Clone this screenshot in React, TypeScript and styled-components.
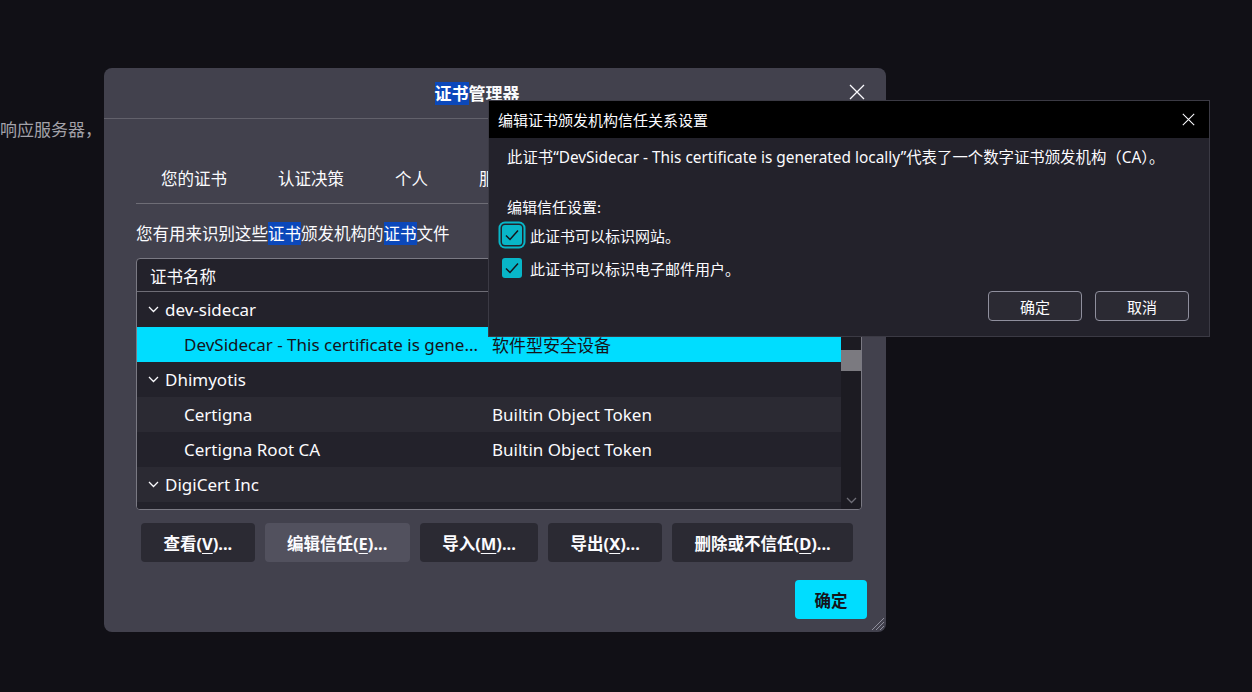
import styled, { createGlobalStyle } from 'styled-components';

const GlobalStyle = createGlobalStyle`
  html, body {
    margin: 0;
    padding: 0;
    background: #111016;
  }
  body {
    font-family: "Noto Sans", "Noto Sans CJK SC", sans-serif;
    color: #fbfbfe;
  }
  * {
    box-sizing: border-box;
  }
`;

const Screen = styled.div`
  position: relative;
  width: 1252px;
  height: 692px;
  overflow: hidden;
  background: #111016;
`;

const PageText = styled.p`
  margin: 0;
  padding-top: 117px;
  font-size: 17px;
  line-height: 26px;
  color: #a3a2a9;
`;

const Window = styled.div`
  position: absolute;
  left: 104px;
  top: 68px;
  width: 782px;
  height: 564px;
  background: #42414d;
  border-radius: 8px;
  display: flex;
  flex-direction: column;
`;

const TitleBar = styled.div`
  display: flex;
  align-items: center;
  height: 51px;
  padding-bottom: 2px;
  border-bottom: 1px solid #62616b;
`;

const Title = styled.h1`
  flex: 1;
  margin: 0 0 0 4px;
  text-align: center;
  font-size: 17px;
  font-weight: 700;
`;

const Mark = styled.span`
  background: #0b48ba;
  color: #fff;
`;

const CloseButton = styled.button`
  width: 22px;
  height: 22px;
  margin-right: 18px;
  padding: 0;
  border: none;
  background: transparent;
  display: flex;
  align-items: center;
  justify-content: center;
`;

const Body = styled.div`
  padding: 0 24px 0 32px;
  display: flex;
  flex-direction: column;
`;

const Tabs = styled.div`
  margin-top: 35px;
  height: 50px;
  display: flex;
  gap: 1px;
  border-bottom: 1px solid #6e6d76;
`;

const Tab = styled.div`
  padding: 0 25px 2px;
  display: flex;
  align-items: center;
  font-size: 16.5px;
  white-space: nowrap;
`;

const Description = styled.p`
  margin: 18px 0 0;
  font-size: 16.5px;
  line-height: 24px;
  padding-bottom: 1px;
`;

const Table = styled.div`
  margin-top: 11px;
  height: 252px;
  border: 1px solid #7a7983;
  border-radius: 4px;
  background: #23222b;
  display: flex;
  flex-direction: column;
  overflow: hidden;
`;

const Header = styled.div`
  height: 33px;
  flex-shrink: 0;
  display: flex;
  align-items: center;
  padding-top: 1px;
  border-bottom: 1px solid #6e6d76;
  font-size: 16.5px;
`;

const HeaderCell = styled.div<{ $width?: number }>`
  width: ${(p) => (p.$width ? `${p.$width}px` : 'auto')};
  flex: ${(p) => (p.$width ? 'none' : 1)};
  padding-left: 13px;
`;

const TableBody = styled.div`
  flex: 1;
  display: flex;
  overflow: hidden;
`;

const Rows = styled.div`
  flex: 1;
`;

const Row = styled.div<{ $alt?: boolean; $selected?: boolean }>`
  height: 35px;
  display: flex;
  align-items: center;
  font-size: 17px;
  white-space: nowrap;
  background: ${(p) => (p.$selected ? '#00ddff' : p.$alt ? '#2b2a33' : '#23222b')};
  color: ${(p) => (p.$selected ? '#15141a' : '#fbfbfe')};
`;

const NameCell = styled.div<{ $child?: boolean }>`
  width: 355px;
  flex: none;
  display: flex;
  align-items: center;
  gap: 6px;
  padding-left: ${(p) => (p.$child ? '47px' : '11px')};
  overflow: hidden;
`;

const TokenCell = styled.div`
  flex: 1;
`;

const Scrollbar = styled.div`
  width: 20px;
  flex: none;
  background: #1c1b22;
  display: flex;
  flex-direction: column;
  align-items: center;
`;

const Thumb = styled.div`
  margin-top: 58px;
  width: 20px;
  height: 21px;
  background: #7b7a80;
`;

const ScrollArrow = styled.div`
  margin-top: auto;
  margin-bottom: 5px;
  display: flex;
`;

const ButtonRow = styled.div`
  margin-top: 13px;
  padding-left: 5px;
  display: flex;
  gap: 10px;
`;

const ActionButton = styled.button<{ $active?: boolean }>`
  height: 39px;
  padding: 0 22.4px;
  border: none;
  border-radius: 4px;
  background: ${(p) => (p.$active ? '#52515e' : '#2b2a33')};
  color: #fbfbfe;
  font-family: inherit;
  font-size: 16.5px;
  font-weight: 700;
  white-space: nowrap;
  u {
    text-underline-offset: 3px;
  }
`;

const OkRow = styled.div`
  margin-top: 18px;
  margin-right: -5px;
  display: flex;
  justify-content: flex-end;
`;

const PrimaryButton = styled.button`
  width: 72px;
  height: 39px;
  border: none;
  border-radius: 4px;
  background: #00ddff;
  color: #15141a;
  font-family: inherit;
  font-size: 16.5px;
  font-weight: 700;
`;

const Grip = styled.svg`
  position: absolute;
  right: 1px;
  bottom: 1px;
`;

const Dialog = styled.div`
  position: absolute;
  left: 488px;
  top: 100px;
  width: 722px;
  height: 237px;
  background: #23222b;
  border: 1px solid #3b3a44;
  display: flex;
  flex-direction: column;
`;

const DialogTitleBar = styled.div`
  height: 37px;
  background: #000;
  display: flex;
  align-items: center;
  justify-content: space-between;
  padding: 0 14px 0 9px;
  font-size: 15px;
`;

const DialogBody = styled.div`
  padding: 9px 20px 0 18px;
  display: flex;
  flex-direction: column;
  font-size: 15px;
`;

const Message = styled.p`
  margin: 0;
  font-size: 15.4px;
  line-height: 22px;
  white-space: nowrap;
`;

const SectionLabel = styled.p`
  margin: 27px 0 0;
  line-height: 22px;
`;

const CheckRow = styled.label<{ $first?: boolean }>`
  margin-top: ${(p) => (p.$first ? '3px' : '5px')};
  margin-left: -5px;
  height: 28px;
  display: flex;
  align-items: center;
  gap: 8px;
`;

const Box = styled.span<{ $focused?: boolean }>`
  width: 20px;
  height: 20px;
  border-radius: 3px;
  background: #08b6c8;
  display: flex;
  align-items: center;
  justify-content: center;
  box-shadow: ${(p) => (p.$focused ? '0 0 0 1.5px #23222b, 0 0 0 3.5px #08b6c8' : 'none')};
`;

const DialogButtons = styled.div`
  margin-top: 9px;
  display: flex;
  justify-content: flex-end;
  gap: 13px;
`;

const DialogButton = styled.button`
  width: 94px;
  height: 30px;
  border: 1px solid #8f8f9d;
  border-radius: 4px;
  background: #2b2a33;
  color: #fbfbfe;
  font-family: inherit;
  font-size: 15px;
`;

const Chevron = ({ color = '#fbfbfe' }: { color?: string }) => (
  <svg width="11" height="7" viewBox="0 0 11 7">
    <polyline points="1,1 5.5,5.5 10,1" fill="none" stroke={color} strokeWidth="1.3" />
  </svg>
);

const Cross = ({ size }: { size: number }) => (
  <svg width={size} height={size} viewBox="0 0 16 16">
    <path d="M1 1 L15 15 M15 1 L1 15" stroke="#fbfbfe" strokeWidth="1.3" fill="none" />
  </svg>
);

const Check = () => (
  <svg width="16" height="16" viewBox="0 0 16 16">
    <polyline points="2,8.5 6,12.5 14,3.5" fill="none" stroke="#15141a" strokeWidth="1.5" />
  </svg>
);

type Cert = { name: string; token?: string; child?: boolean; selected?: boolean };

const certs: Cert[] = [
  { name: 'dev-sidecar' },
  { name: 'DevSidecar - This certificate is gene...', token: '软件型安全设备', child: true, selected: true },
  { name: 'Dhimyotis' },
  { name: 'Certigna', token: 'Builtin Object Token', child: true },
  { name: 'Certigna Root CA', token: 'Builtin Object Token', child: true },
  { name: 'DigiCert Inc' },
  { name: '', child: true },
];

const tabs = ['您的证书', '认证决策', '个人', '服务器', '证书颁发机构'];

export default function App() {
  return (
    <Screen>
      <GlobalStyle />
      <PageText>响应服务器，</PageText>

      <Window>
        <TitleBar>
          <Title>
            <Mark>证书</Mark>管理器
          </Title>
          <CloseButton>
            <Cross size={16} />
          </CloseButton>
        </TitleBar>
        <Body>
          <Tabs>
            {tabs.map((t) => (
              <Tab key={t}>{t}</Tab>
            ))}
          </Tabs>
          <Description>
            您有用来识别这些<Mark>证书</Mark>颁发机构的<Mark>证书</Mark>文件
          </Description>
          <Table>
            <Header>
              <HeaderCell $width={355}>证书名称</HeaderCell>
              <HeaderCell />
            </Header>
            <TableBody>
              <Rows>
                {certs.map((c, i) => (
                  <Row key={i} $alt={i % 2 === 1} $selected={c.selected}>
                    <NameCell $child={c.child}>
                      {!c.child && <Chevron />}
                      {c.name}
                    </NameCell>
                    <TokenCell>{c.token}</TokenCell>
                  </Row>
                ))}
              </Rows>
              <Scrollbar>
                <Thumb />
                <ScrollArrow>
                  <Chevron color="#6e6d76" />
                </ScrollArrow>
              </Scrollbar>
            </TableBody>
          </Table>
          <ButtonRow>
            <ActionButton>
              查看(<u>V</u>)...
            </ActionButton>
            <ActionButton $active>
              编辑信任(<u>E</u>)...
            </ActionButton>
            <ActionButton>
              导入(<u>M</u>)...
            </ActionButton>
            <ActionButton>
              导出(<u>X</u>)...
            </ActionButton>
            <ActionButton>
              删除或不信任(<u>D</u>)...
            </ActionButton>
          </ButtonRow>
          <OkRow>
            <PrimaryButton>确定</PrimaryButton>
          </OkRow>
        </Body>
        <Grip width="16" height="16" viewBox="0 0 16 16">
          <path d="M15 3 L3 15 M15 7 L7 15 M15 11 L11 15" stroke="#8f8f9d" strokeWidth="1" />
        </Grip>
      </Window>

      <Dialog>
        <DialogTitleBar>
          <span>编辑证书颁发机构信任关系设置</span>
          <Cross size={13} />
        </DialogTitleBar>
        <DialogBody>
          <Message>
            此证书“DevSidecar - This certificate is generated locally”代表了一个数字证书颁发机构（CA）。
          </Message>
          <SectionLabel>编辑信任设置:</SectionLabel>
          <CheckRow $first>
            <Box $focused>
              <Check />
            </Box>
            此证书可以标识网站。
          </CheckRow>
          <CheckRow>
            <Box>
              <Check />
            </Box>
            此证书可以标识电子邮件用户。
          </CheckRow>
          <DialogButtons>
            <DialogButton>确定</DialogButton>
            <DialogButton>取消</DialogButton>
          </DialogButtons>
        </DialogBody>
      </Dialog>
    </Screen>
  );
}
